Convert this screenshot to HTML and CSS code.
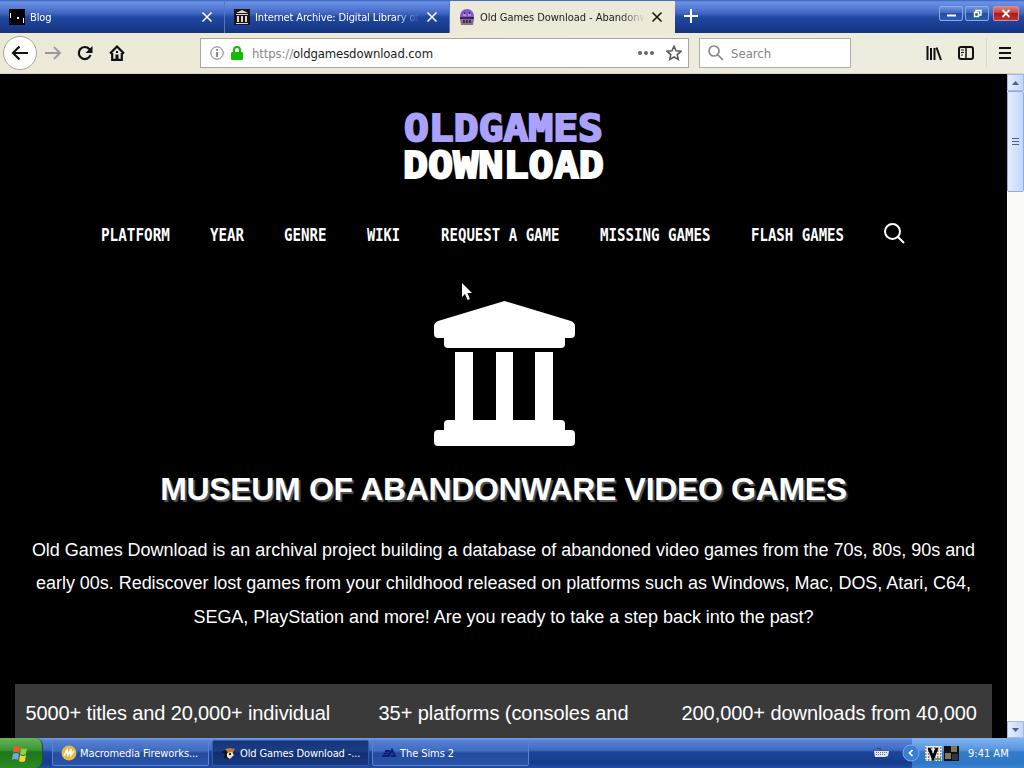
FILE: index.html
```html
<!DOCTYPE html>
<html lang="en">
<head>
    <meta charset="UTF-8">
    <meta name="viewport" content="width=device-width, initial-scale=1.0">
    <title>Old Games Download - Abandonware</title>
    <link rel="stylesheet" href="styles.css">
</head>
<body>
    <header class="tabs">
        <div class="tab first">
            <svg class="favicon" width="16" height="16" viewBox="0 0 16 16"><path fill="#000" d="M0 0h16v16H0z"/><path fill="#fff" d="M1 4h1v5H1zM8 8h2v2H8zM14 9h1v5h-1z"/></svg>
            <span class="tab-title">Blog</span>
            <svg class="close" width="12" height="12" viewBox="0 0 12 12"><path d="M1.500 1.500l9 9m0-9l-9 9"/></svg>
        </div>
        <div class="tab second">
            <svg class="favicon" width="16" height="16" viewBox="0 0 16 16"><path fill="#17171b" d="M0 0h16v16H0z"/><path fill="#ddd6cc" d="M8 1l6 3H2zM2 5h12v1H2zM3 7h2v6H3zM7 7h2v6H7zM11 7h2v6h-2zM2 14h12v1H2z"/></svg>
            <span class="tab-title">Internet Archive: Digital Library of</span>
            <svg class="close" width="12" height="12" viewBox="0 0 12 12"><path d="M1.500 1.500l9 9m0-9l-9 9"/></svg>
        </div>
        <div class="tab active">
            <svg class="favicon" width="16" height="16" viewBox="0 0 16 16"><circle cx="8" cy="7" r="7" fill="#8258c8"/><path fill="#39255c" d="M1 8h14v2H1zM5 3h1v2H5zM10 3h1v2h-1z"/><path fill="#84708e" d="M1 10h14l-1 6H2z"/><path fill="#3f3048" d="M4 11h2v3H4zM7 11h2v3H7zM10 11h2v3h-2z"/><path fill="#b78df0" d="M4 5h3v2H4zM9 5h3v2H9z"/></svg>
            <span class="tab-title">Old Games Download - Abandonware</span>
            <svg class="close" width="12" height="12" viewBox="0 0 12 12"><path d="M1.500 1.500l9 9m0-9l-9 9"/></svg>
        </div>
        <svg class="new-tab" width="14" height="14" viewBox="0 0 14 14"><path d="M7 0v14M0 7h14"/></svg>
        <div class="window-buttons">
            <span><svg width="24" height="15" viewBox="0 0 24 15"><path d="M8 9.500h9" stroke="#fff" stroke-width="2"/></svg></span>
            <span><svg width="24" height="15" viewBox="0 0 24 15"><path d="M11 6V4.500h5V9h-2M9.500 6.500h4v4h-4z" fill="none" stroke="#fff" stroke-width="1.400"/></svg></span>
            <span class="red"><svg width="26" height="15" viewBox="0 0 26 15"><path d="M9.500 4l7 7m0-7l-7 7" stroke="#fff" stroke-width="1.800"/></svg></span>
        </div>
    </header>

    <div class="toolbar">
        <div class="back"><svg width="18" height="16" viewBox="0 0 18 16"><path d="M17 8H2m6.500-6.500L2 8l6.500 6.500"/></svg></div>
        <svg class="forward" width="18" height="16" viewBox="0 0 18 16"><path d="M1 8h15M10 2l6 6-6 6"/></svg>
        <svg class="reload" width="16" height="16" viewBox="0 0 16 16"><path d="M13.500 10A6 6 0 1 1 12.300 4L14 6"/><path class="solid" d="M15.500 1v7h-7z"/></svg>
        <svg class="home" width="16" height="16" viewBox="0 0 16 16"><path d="M1 8.500L8 1.500l7 7M3.200 8v6.800h9.600V8"/><path class="solid" d="M6.500 9.500h3V15h-3zM7 6h2v2H7z"/></svg>
        <div class="address">
            <svg width="14" height="14" viewBox="0 0 14 14"><circle cx="7" cy="7" r="6.200" fill="none" stroke="#777"/><path d="M6.200 3h1.700v1.700H6.200zM6.200 6h1.700v5H6.200z" fill="#777"/></svg>
            <svg class="lock" width="12" height="14" viewBox="0 0 12 14"><path d="M3 7V4a3 3 0 0 1 6 0v3" fill="none" stroke="#12bc00" stroke-width="2"/><rect y="6" width="12" height="8" rx="1.200" fill="#12bc00"/></svg>
            <span class="url"><i>https://</i>oldgamesdownload.com</span>
            <svg class="dots" width="16" height="4" viewBox="0 0 16 4"><circle cx="2" cy="2" r="2"/><circle cx="8" cy="2" r="2"/><circle cx="14" cy="2" r="2"/></svg>
            <svg width="16" height="16" viewBox="0 0 16 16"><path d="M8 1.300l2 4.500 4.900.5-3.700 3.300 1.100 4.900L8 12l-4.300 2.500 1.100-4.900L1.100 6.300 6 5.800z" fill="none" stroke="#5b5b5b" stroke-width="1.600"/></svg>
        </div>
        <div class="search">
            <svg width="16" height="16" viewBox="0 0 16 16"><path d="M10 10l5 5M11 6A5 5 0 1 1 1 6a5 5 0 0 1 10 0z" fill="none" stroke="#888" stroke-width="1.700"/></svg>
            <span>Search</span>
        </div>
        <svg class="library" width="16" height="16" viewBox="0 0 16 16"><path d="M1.500 1v14M5 3v12M8.500 3v12M10.500 2.500L15 15" fill="none" stroke="#111" stroke-width="2"/></svg>
        <svg class="sidebar" width="16" height="14" viewBox="0 0 16 14"><rect x="1" y="1" width="14" height="12" rx="2" fill="none" stroke="#111" stroke-width="2"/><path d="M8 1v12" stroke="#111" stroke-width="1.500"/><path d="M3 4h3M3 6.500h3M3 9h2" stroke="#111"/></svg>
        <div class="divider"></div>
        <svg class="menu" width="12" height="12" viewBox="0 0 12 12"><path d="M0 1h12M0 6h12M0 11h12" stroke="#111" stroke-width="2"/></svg>
    </div>

    <div class="viewport">
        <main>
            <svg class="logo" width="204" height="74" viewBox="0 0 204 74">
                <text class="purple" x="2" y="31" textLength="199" lengthAdjust="spacingAndGlyphs">OLDGAMES</text>
                <text class="white" x="1" y="68" textLength="201" lengthAdjust="spacingAndGlyphs">DOWNLOAD</text>
            </svg>
            <nav>
                <svg width="69" height="22"><text y="17" textLength="69" lengthAdjust="spacingAndGlyphs">PLATFORM</text></svg>
                <svg width="34" height="22"><text y="17" textLength="34" lengthAdjust="spacingAndGlyphs">YEAR</text></svg>
                <svg width="43" height="22"><text y="17" textLength="42.500" lengthAdjust="spacingAndGlyphs">GENRE</text></svg>
                <svg width="34" height="22"><text y="17" textLength="33" lengthAdjust="spacingAndGlyphs">WIKI</text></svg>
                <svg width="119" height="22"><text y="17" textLength="118.500" lengthAdjust="spacingAndGlyphs">REQUEST A GAME</text></svg>
                <svg width="111" height="22"><text y="17" textLength="110.500" lengthAdjust="spacingAndGlyphs">MISSING GAMES</text></svg>
                <svg width="93" height="22"><text y="17" textLength="93" lengthAdjust="spacingAndGlyphs">FLASH GAMES</text></svg>
                <svg class="find" width="21" height="21" viewBox="0 0 21 21"><circle cx="8.500" cy="8.500" r="7.500"/><path d="M14 14l6 6"/></svg>
            </nav>
            <svg class="museum" width="141" height="146" viewBox="0 0 141 146">
                <path d="M70.500 0L137 20q4 2 4 5v8q0 4-4 4h-6v6q0 4-4 4H14q-4 0-4-4v-6H4q-4 0-4-4v-8q0-3 4-5z"/>
                <path d="M21 51h18v68h23V51h17v68h22V51h18v68h8q4 0 4 4v6h6q4 0 4 4v8q0 4-4 4H4q-4 0-4-4v-8q0-4 4-4h6v-6q0-4 4-4h7z"/>
            </svg>
            <h1>MUSEUM OF ABANDONWARE VIDEO GAMES</h1>
            <p>Old Games Download is an archival project building a database of abandoned video games from the 70s, 80s, 90s and<br>early 00s. Rediscover lost games from your childhood released on platforms such as Windows, Mac, DOS, Atari, C64,<br>SEGA, PlayStation and more! Are you ready to take a step back into the past?</p>
            <div class="stats">
                <div>5000+ titles and 20,000+ individual</div>
                <div>35+ platforms (consoles and</div>
                <div>200,000+ downloads from 40,000</div>
            </div>
        </main>
        <div class="scrollbar">
            <div class="arrow"><svg width="7" height="4"><path d="M0 4l3.500-4L7 4z"/></svg></div>
            <div class="thumb"><svg width="7" height="8"><path d="M0 0h7v1H0zM0 3h7v1H0zM0 6h7v1H0z"/></svg></div>
            <div class="arrow down"><svg width="7" height="4"><path d="M0 0l3.500 4L7 0z"/></svg></div>
        </div>
        <svg class="cursor" width="12" height="19" viewBox="0 0 12 19"><path d="M1 1v14l3-3 2.600 6 2.300-1-2.500-6H11z" fill="#fff"/></svg>
    </div>

    <footer>
        <div class="start">
            <svg width="18" height="18" viewBox="0 0 18 18"><path fill="#f1582c" d="M3 2q3-2 6 0L8 8Q5 6 2 8z"/><path fill="#8fd045" d="M10 3q3 2 6 0l-1 6q-3 2-6 0z"/><path fill="#6fa7f4" d="M2 9q3-2 6 0l-1 6q-3-2-6 0z"/><path fill="#fbd13b" d="M9 10q3 2 6 0l-1 6q-3 2-6 0z"/></svg>
        </div>
        <div class="task">
            <svg width="16" height="16" viewBox="0 0 16 16"><circle cx="8" cy="8" r="7.500" fill="#e8b93f"/><path d="M3 11l3-6 1 5 3-6v6l3-4" fill="none" stroke="#fff" stroke-width="1.700"/></svg>
            <span>Macromedia Fireworks...</span>
        </div>
        <div class="task pressed">
            <svg width="16" height="16" viewBox="0 0 16 16"><path fill="#17120f" d="M0 7l5-2 4 2 5-2-2 6-3 3-6-1 1-4z"/><path fill="#c9753d" d="M4 4l5-1 5 1-2 4-4 1z"/><path fill="#e9e2d8" d="M6 8l5-1 2 3-4 4-3-2z"/><path fill="#222" d="M8 8h2v2H8z"/></svg>
            <span>Old Games Download -...</span>
        </div>
        <div class="task sims">
            <svg width="16" height="16" viewBox="0 0 16 16"><path d="M4 6h5M2.500 8.500h6M1 11h7l3-6 3 6h-4" fill="none" stroke="#101d77" stroke-width="2"/></svg>
            <span>The Sims 2</span>
        </div>
        <svg class="keyboard" width="15" height="10" viewBox="0 0 15 10"><path d="M3 1q2-2 4 0" fill="none" stroke="#26376e"/><path fill="#e6e8f5" d="M0 3h15l-1 5-3 1H1z"/><path d="M2 4.500h11M2 6.500h10" stroke="#64709e" stroke-dasharray="1 1"/></svg>
        <div class="tray">
            <svg class="chevron" width="18" height="18" viewBox="0 0 18 18"><circle cx="9" cy="9" r="8" fill="#3b7fd4" stroke="#75aaea"/><path d="M10.500 6l-3 3 3 3" fill="none" stroke="#fff" stroke-width="1.700"/></svg>
            <svg class="vicon" width="17" height="15" viewBox="0 0 17 15"><path fill="#eee" d="M0 0h17v15H0z"/><path d="M0 2h17M0 5h17M0 8h17M0 11h17M0 14h17" stroke="#222" stroke-dasharray="1.500 1.500"/><path d="M4 2l4 10 4-10" fill="none" stroke="#000" stroke-width="3"/><path fill="#57a52c" d="M10 12h6v2h-6z"/></svg>
            <svg width="15" height="15" viewBox="0 0 15 15"><path fill="#111" d="M0 0h15v15H0z"/><path fill="#80765a" d="M7 0h6v6H7zM1 7h6v6H1z"/><path fill="#334" d="M8 8h6v6H8z"/></svg>
            <span>9:41 AM</span>
        </div>
    </footer>
</body>
</html>
```
FILE: styles.css
```css
* {
    box-sizing: border-box;
    padding: 0;
    margin: 0;
}

body {
    width: 1024px;
    height: 768px;
    overflow: hidden;
    display: flex;
    flex-direction: column;
    background: #000;
    font-family: "DejaVu Sans Condensed", "DejaVu Sans", sans-serif;
    font-stretch: condensed;
    font-size: 11px;
}

svg {
    display: block;
    flex-shrink: 0;
}

/* tab strip */
.tabs {
    height: 33px;
    display: flex;
    background: linear-gradient(#3960b8 0, #6b93e6 2px, #5a80d8 7px, #3c62bd 14px, #2149a1 17px, #183a8c 28px, #16357f 32px);
}

.tab {
    height: 33px;
    display: flex;
    align-items: center;
    color: #fff;
    padding: 1px 11px 0 9px;
    border-right: 1px solid #5576c3;
}

.tab.first {
    width: 225px;
}

.tab.second {
    width: 225px;
}

.tab.active {
    width: 225px;
    height: 32px;
    margin-top: 1px;
    background: #ece9d8;
    color: #1b1b1b;
    border: 0;
    padding-bottom: 1px;
    padding-right: 12px;
}

.favicon {
    margin-right: 5px;
}

.tab-title {
    flex: 1;
    white-space: nowrap;
    overflow: hidden;
    margin-right: 6px;
    letter-spacing: -0.13px;
    -webkit-mask-image: linear-gradient(90deg, #000 85%, transparent);
    mask-image: linear-gradient(90deg, #000 85%, transparent);
}

.active .tab-title {
    letter-spacing: -0.05px;
}

.close {
    fill: none;
    stroke: #fff;
    stroke-width: 1.5;
}

.active .close {
    stroke: #111;
}

.new-tab {
    margin: 9px 0 0 9px;
    stroke: #fff;
    stroke-width: 2;
}

.window-buttons {
    display: flex;
    gap: 2px;
    margin: 6px 5px 0 auto;
}

.window-buttons span {
    height: 15px;
    border: 1px solid #86a7e8;
    border-radius: 2px;
    background: linear-gradient(#6f96e0, #4068ba 45%, #274e9f 50%, #305bad);
    overflow: hidden;
}

.window-buttons svg {
    margin: -1px;
}

.window-buttons .red {
    margin-left: 2px;
    border-color: #d98c92;
    background: linear-gradient(#df827e, #c9403c 45%, #a81e20 50%, #bf3530);
}

/* navigation toolbar */
.toolbar {
    height: 41px;
    display: flex;
    align-items: center;
    padding-left: 3px;
    background: linear-gradient(90deg, #ece9d8, #eeecdf);
    border-bottom: 1px solid #d5d3c4;
}

.back {
    width: 34px;
    height: 34px;
    display: flex;
    align-items: center;
    justify-content: center;
    border: 1px solid #aaa79c;
    border-radius: 50%;
    background: #fdfdfb;
}

.back svg,
.forward,
.reload,
.home {
    fill: none;
    stroke: #111;
    stroke-width: 2.2;
}

.toolbar .solid {
    fill: #111;
    stroke: none;
}

.toolbar .forward {
    margin-left: 7px;
    stroke: #999;
    stroke-width: 1.8;
}

.reload {
    margin-left: 15px;
}

.home {
    margin-left: 16px;
}

.address {
    width: 489px;
    height: 30px;
    margin-left: 75px;
    padding: 0 6px 0 9px;
    display: flex;
    align-items: center;
    background: #fff;
    border: 1px solid #aaa89d;
    font-size: 13px;
}

.lock {
    margin-left: 7px;
}

.url {
    flex: 1;
    margin-left: 9px;
    color: #1c1c1c;
    letter-spacing: -0.12px;
}

.url i {
    font-style: normal;
    color: #888;
}

.dots {
    margin-right: 12px;
    fill: #666;
}

.search {
    width: 152px;
    height: 30px;
    margin-left: 10px;
    padding-left: 8px;
    display: flex;
    align-items: center;
    gap: 7px;
    background: #fff;
    border: 1px solid #b3b1a6;
    color: #858585;
    font-size: 13px;
}

.library {
    margin-left: 75px;
}

.sidebar {
    margin-left: 16px;
}

.divider {
    width: 1px;
    height: 30px;
    margin-left: 12px;
    background: #dcd9ca;
}

.menu {
    margin-left: 12px;
}

/* page */
.viewport {
    position: relative;
    height: 664px;
    display: flex;
}

main {
    width: 1007px;
    overflow: hidden;
    display: flex;
    flex-direction: column;
    align-items: center;
    background: #000;
    color: #fff;
    font-family: "Liberation Sans", Arial, sans-serif;
    font-stretch: normal;
}

.logo {
    margin-top: 36px;
    font: bold 37px "DejaVu Sans Mono", monospace;
    stroke-width: 2;
    stroke-linejoin: miter;
}

.purple {
    fill: #a9a1fb;
    stroke: #a9a1fb;
}

.white {
    fill: #fff;
    stroke: #fff;
}

nav {
    margin: 40px 0 0 -2px;
    height: 22px;
    display: flex;
    gap: 40px;
    font: bold 18px "DejaVu Sans Mono", monospace;
    fill: #fff;
}

nav svg {
    overflow: visible;
}

.find {
    margin-top: -1px;
    fill: none;
    stroke: #fff;
    stroke-width: 2;
}

.museum {
    margin: 55px 0 0 2px;
    fill: #fff;
}

h1 {
    margin-top: 22px;
    font-size: 32px;
    line-height: 40px;
    letter-spacing: -0.33px;
    text-shadow: 2px 2px 1px #555;
    white-space: nowrap;
}

p {
    margin-top: 25px;
    font-size: 18px;
    line-height: 33.4px;
    letter-spacing: -0.03px;
    text-align: center;
    white-space: nowrap;
}

.stats {
    width: 977px;
    height: 60px;
    margin-top: 50px;
    display: flex;
    flex-shrink: 0;
    background: #3a3a3a;
    font-size: 20px;
    line-height: 58px;
    letter-spacing: -0.07px;
}

.stats div {
    flex: 1;
    text-align: center;
    white-space: nowrap;
}

.stats div:first-child {
    letter-spacing: -0.13px;
}

.scrollbar {
    width: 17px;
    display: flex;
    flex-direction: column;
    background: #fbfbf7;
}

.arrow,
.thumb {
    height: 17px;
    display: flex;
    align-items: center;
    justify-content: center;
    border: 1px solid #a4b9e8;
    background: linear-gradient(90deg, #e4edff, #c3d5fb);
    fill: #4d6185;
}

.thumb {
    height: 101px;
    border-radius: 2px;
    border-color: #8faae4;
}

.down {
    margin-top: auto;
}

.cursor {
    position: absolute;
    left: 461px;
    top: 208px;
}

/* taskbar */
footer {
    height: 30px;
    display: flex;
    align-items: center;
    color: #fff;
    background: linear-gradient(#709be8 0, #5781d4 3px, #3e69bf 12px, #1c459b 14px, #173c8c 25px, #234fa4 30px);
}

.start {
    width: 43px;
    height: 30px;
    padding: 7px 0 0 11px;
    margin-right: 9px;
    border-radius: 0 8px 8px 0;
    background: linear-gradient(#65b35a, #3a9634 12px, #1d7519 14px, #2b8b23);
    border-right: 1px solid #1a4a52;
}

.task {
    width: 157px;
    height: 26px;
    margin-right: 3px;
    padding-left: 8px;
    display: flex;
    align-items: center;
    gap: 3px;
    border: 1px solid #5b82cd;
    border-radius: 2px;
    background: linear-gradient(#527fd3, #406bc0 10px, #244d9f 12px, #2853a9);
    letter-spacing: -0.08px;
    white-space: nowrap;
}

.task.pressed {
    background: linear-gradient(#173679, #1b3d86 10px, #112e71 12px, #18397f);
    border-color: #365ba5;
    letter-spacing: -0.12px;
}

.keyboard {
    margin-left: auto;
}

.tray {
    width: 112px;
    height: 30px;
    margin-left: 23px;
    display: flex;
    align-items: center;
    background: linear-gradient(#81b3f1, #5795df 12px, #337bcb 14px, #2e77c8 25px, #3c82cf);
}

.chevron {
    margin-left: -10px;
}

.vicon {
    margin: 0 2px 0 5px;
}

.tray span {
    margin-left: 9px;
    white-space: nowrap;
}
```
